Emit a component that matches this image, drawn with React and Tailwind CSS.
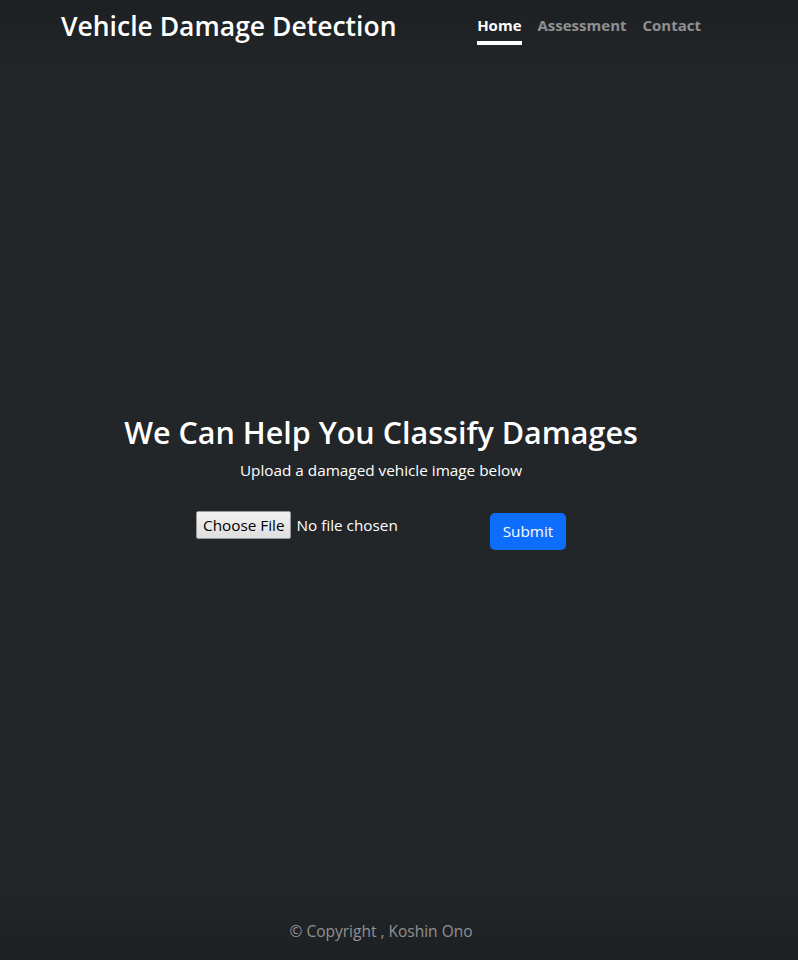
import React from 'react';

export default function App() {
  const font = { fontFamily: '"Open Sans", "Noto Sans", sans-serif' };

  return (
    <div
      style={font}
      className="min-h-screen w-full bg-[#222629] bg-[linear-gradient(to_bottom,#1d2023_0px,#222629_70px,#222629_calc(100%-70px),#1d2023_100%)] text-white flex flex-col"
    >
      {/* Header */}
      <header className="ml-[45px] w-[672px] px-4 pt-[11px] flex items-start justify-between">
        <h3 className="text-[26.5px] font-semibold leading-[1.2]">Vehicle Damage Detection</h3>
        <nav className="flex items-center mt-[2px]">
          <a className="text-[15px] font-bold text-white border-b-4 border-white pb-[4px] leading-6">Home</a>
          <a className="ml-4 text-[15px] font-bold text-white/50 border-b-4 border-transparent pb-[4px] leading-6">Assessment</a>
          <a className="ml-4 text-[15px] font-bold text-white/50 border-b-4 border-transparent pb-[4px] leading-6">Contact</a>
        </nav>
      </header>

      {/* Main */}
      <main className="ml-[45px] w-[672px] px-4 flex-1 flex flex-col justify-center items-center text-center">
        <h1 className="text-[30.5px] font-semibold leading-[1.2] mb-[8px]">We Can Help You Classify Damages</h1>
        <p className="text-[15.3px] leading-6">Upload a damaged vehicle image below</p>
        <form className="mt-[29px] flex items-start" onSubmit={(e) => e.preventDefault()}>
          <div className="w-[294px] flex items-center text-[15.3px]">
            <span className="h-[28px] px-[6px] flex items-center bg-gradient-to-b from-[#f2f2f2] to-[#dedede] border border-[#999999] text-black rounded-[2px]">
              Choose File
            </span>
            <span className="ml-[5px] text-white">No file chosen</span>
          </div>
          <button
            type="submit"
            className="mt-[2px] h-[37px] w-[76px] bg-[#0d6efd] rounded-[5px] text-white text-[15.3px]"
          >
            Submit
          </button>
        </form>
      </main>

      {/* Footer */}
      <footer className="ml-[45px] w-[672px] px-4 pb-[17px] text-center">
        <p className="text-[15.5px] leading-6 text-white/50">© Copyright , Koshin Ono</p>
      </footer>
    </div>
  );
}
